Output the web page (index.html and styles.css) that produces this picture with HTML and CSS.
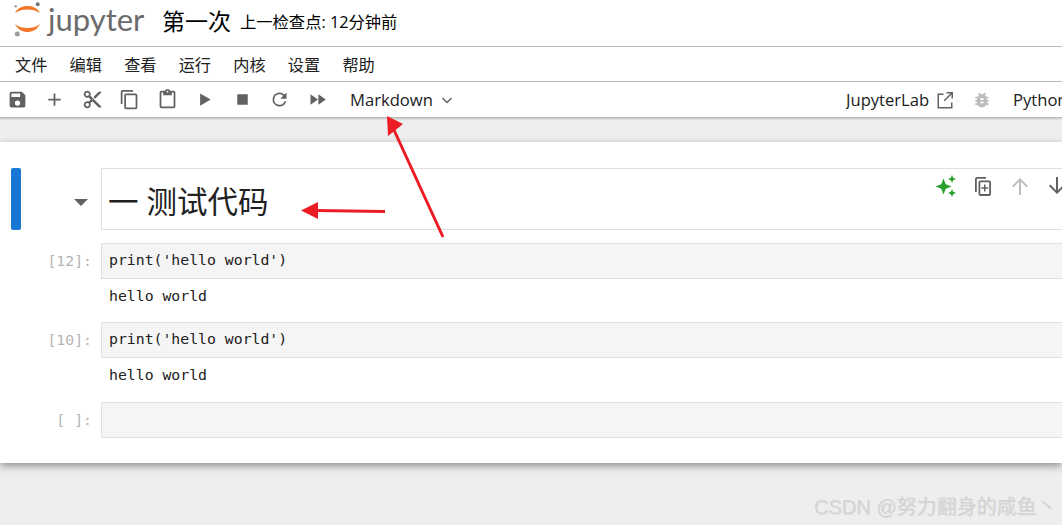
FILE: index.html
```html
<!DOCTYPE html>
<html lang="zh">
<head>
<meta charset="utf-8">
<title>第一次</title>
<link rel="stylesheet" href="styles.css">
</head>
<body>
<header class="topbar">
  <svg class="logo" width="30" height="36" viewBox="0 0 30 36">
    <path fill="#f37726" d="M2 11C5 5.500 10 4 14.500 4S24 5.500 27 11C23 8.500 19 7.500 14.500 7.500S6 8.500 2 11z"/>
    <path fill="#f37726" d="M2 22C6 25 10 26 14.500 26S23 25 27 22C24 28 19 30 14.500 30S5 28 2 22z"/>
    <circle cx="24.700" cy="2.300" r="2" fill="#767677"/>
    <circle cx="2.700" cy="4.300" r="1.300" fill="#9e9e9e"/>
    <circle cx="4.300" cy="32" r="2.500" fill="#9e9e9e"/>
  </svg>
  <span class="wordmark">jupyter</span>
  <span class="nbname">第一次</span>
  <span class="checkpoint">上一检查点: 12分钟前</span>
</header>
<nav class="menubar">
  <span>文件</span><span>编辑</span><span>查看</span><span>运行</span><span>内核</span><span>设置</span><span>帮助</span>
</nav>
<div class="toolbar">
  <svg class="tb" viewBox="0 0 24 24"><path d="M17 3H5a2 2 0 0 0-2 2v14a2 2 0 0 0 2 2h14a2 2 0 0 0 2-2V7l-4-4zm-5 16a3 3 0 1 1 0-6 3 3 0 0 1 0 6zm3-10H5V5h10v4z"/></svg>
  <svg class="tb" viewBox="0 0 24 24"><path d="M19 13h-6v6h-2v-6H5v-2h6V5h2v6h6v2z"/></svg>
  <svg class="tb" viewBox="0 0 24 24"><path d="M9.640 7.640c.23-.5.360-1.050.360-1.640 0-2.210-1.790-4-4-4S2 3.790 2 6s1.790 4 4 4c.59 0 1.140-.13 1.640-.36L10 12l-2.360 2.360C7.140 14.130 6.590 14 6 14c-2.210 0-4 1.790-4 4s1.790 4 4 4 4-1.790 4-4c0-.59-.13-1.140-.36-1.640L12 14l7 7h3v-1L9.640 7.640zM6 8a2 2 0 1 1 0-4 2 2 0 0 1 0 4zm0 12a2 2 0 1 1 0-4 2 2 0 0 1 0 4zm6-7.500a.5.500 0 1 1 0-1 .5.500 0 0 1 0 1zM19 3l-6 6 2 2 7-7V3h-3z"/></svg>
  <svg class="tb" viewBox="0 0 24 24"><path d="M16 1H4a2 2 0 0 0-2 2v14h2V3h12V1zm3 4H8a2 2 0 0 0-2 2v14a2 2 0 0 0 2 2h11a2 2 0 0 0 2-2V7a2 2 0 0 0-2-2zm0 16H8V7h11v14z"/></svg>
  <svg class="tb" viewBox="0 0 24 24"><path d="M19 2h-4.180C14.400.84 13.300 0 12 0S9.600.84 9.180 2H5a2 2 0 0 0-2 2v16a2 2 0 0 0 2 2h14a2 2 0 0 0 2-2V4a2 2 0 0 0-2-2zm-7 0a1 1 0 1 1 0 2 1 1 0 0 1 0-2zm7 18H5V4h2v3h10V4h2v16z"/></svg>
  <svg class="tb" viewBox="0 0 24 24"><path d="M7 5v14l12-7z"/></svg>
  <svg class="tb" viewBox="0 0 24 24"><path d="M6 6h12v12H6z"/></svg>
  <svg class="tb" viewBox="0 0 24 24"><path d="M17.650 6.350A7.960 7.960 0 0 0 12 4a8 8 0 1 0 7.740 10h-2.080A6 6 0 1 1 12 6c1.660 0 3.140.69 4.220 1.780L13 11h7V4l-2.350 2.350z"/></svg>
  <svg class="tb" viewBox="0 0 24 24"><path d="M4 18l8.500-6L4 6v12zm9-12v12l8.500-6L13 6z"/></svg>
  <span class="celltype">Markdown<svg class="chev" viewBox="0 0 12 12"><path d="M1.500 4l4.500 4.500L10.500 4" fill="none" stroke="#616161" stroke-width="1.500"/></svg></span>
  <span class="tb-right">
    <span class="lab">JupyterLab</span>
    <svg class="ext" viewBox="0 0 18 18"><path d="M7.500 2.500H1.500v15h15v-6h-1.500v4.500H3V4h4.500zM10.500 1v1.500h4L7.700 9.300l1 1 6.800-6.800v4H17V1z" fill="#616161"/></svg>
    <svg class="bug" viewBox="0 0 24 24"><path d="M20 8h-2.810a6 6 0 0 0-1.820-1.960L17 4.410 15.590 3l-2.170 2.170a6 6 0 0 0-2.830 0L8.410 3 7 4.410l1.620 1.630A6 6 0 0 0 6.810 8H4v2h2.090c-.5.330-.9.660-.09 1v1H4v2h2v1c0 .34.040.67.090 1H4v2h2.810A6 6 0 0 0 12 21a6 6 0 0 0 5.190-3H20v-2h-2.090c.05-.33.090-.66.090-1v-1h2v-2h-2v-1c0-.34-.04-.67-.09-1H20V8zm-6 8h-4v-2h4v2zm0-4h-4v-2h4v2z" fill="#bdbdbd"/></svg>
    <span class="kernel">Python 3</span>
  </span>
</div>
<main class="stage">
  <section class="panel">
    <article class="cell md">
      <div class="bar"></div>
      <div class="prompt caret"><svg width="14" height="7" viewBox="0 0 14 7"><path d="M0 0h14L7 7z" fill="#616161"/></svg></div>
      <div class="mdbox">
        <span class="h1">一 测试代码</span>
        <div class="celltools">
          <svg width="24" height="24" viewBox="0 0 24 24"><path fill="#2ca02c" d="M9.500 4.500l2.300 5.700 5.700 2.300-5.700 2.300-2.300 5.700-2.300-5.700L1.500 12.500l5.700-2.300zM18 1l1.200 2.800L22 5l-2.800 1.200L18 9l-1.200-2.800L14 5l2.800-1.200zM18 15l1.200 2.800L22 19l-2.800 1.200L18 23l-1.200-2.800L14 19l2.800-1.200z"/></svg>
          <svg width="24" height="24" viewBox="0 0 24 24"><path fill="#616161" d="M15 3H6a2 2 0 0 0-2 2v13h1.800V5c0-.1.100-.2.200-.2h9V3zm3 3.500H9.500a2 2 0 0 0-2 2V20a2 2 0 0 0 2 2H18a2 2 0 0 0 2-2V8.500a2 2 0 0 0-2-2zm.2 13.500H9.300V8.300h8.900V20zM13 10.500h1.500v2.700h2.700v1.500h-2.700v2.700H13v-2.700h-2.700v-1.500H13z"/></svg>
          <svg width="24" height="24" viewBox="0 0 24 24"><path fill="#bdbdbd" d="M12 4l-8 8 1.400 1.400 5.600-5.600V21h2V7.800l5.600 5.600L20 12z"/></svg>
          <svg width="24" height="24" viewBox="0 0 24 24"><path fill="#616161" d="M12 20l8-8-1.400-1.400-5.600 5.600V3h-2v13.200l-5.600-5.600L4 12z"/></svg>
        </div>
      </div>
    </article>
    <article class="cell code c1">
      <div class="prompt">[12]:</div>
      <div class="src">print('hello world')</div>
    </article>
    <div class="output">hello world</div>
    <article class="cell code c2">
      <div class="prompt">[10]:</div>
      <div class="src">print('hello world')</div>
    </article>
    <div class="output">hello world</div>
    <article class="cell code c3">
      <div class="prompt">[ ]:</div>
      <div class="src"></div>
    </article>
  </section>
</main>
<svg class="arrows" width="1062" height="525" viewBox="0 0 1062 525">
  <path d="M443 237L394 130" stroke="#ec1c24" stroke-width="3" fill="none"/>
  <path d="M387 116L403 124 388 136z" fill="#ec1c24"/>
  <path d="M385 211.500L315 210.500" stroke="#ec1c24" stroke-width="3" fill="none"/>
  <path d="M301 210.500L318 202V219z" fill="#ec1c24"/>
</svg>
<div class="watermark">CSDN @努力翻身的咸鱼丶</div>
</body>
</html>
```
FILE: styles.css
```css
* { box-sizing: border-box; }
html, body { margin: 0; height: 525px; width: 1062px; overflow: hidden; }
body {
  position: relative;
  display: flex;
  flex-direction: column;
  background: #eee;
  color: #000;
  font-family: "Open Sans", "Noto Sans CJK SC", sans-serif;
}
.topbar {
  height: 47px;
  flex: none;
  background: #fff;
  border-bottom: 1px solid #bdbdbd;
  display: flex;
  align-items: center;
  overflow: hidden;
}
.logo { margin-left: 13px; margin-top: -6px; flex: none; }
.wordmark {
  margin-left: 5px;
  width: 114px;
  font-family: "Lato", sans-serif;
  font-size: 31px;
  letter-spacing: 0;
  color: #6b6b6b;
  margin-top: -9px;
}
.nbname { font-size: 23px; color: #000; margin-top: -6px; }
.checkpoint { margin-left: 9px; font-size: 16.300px; margin-top: -5px; }
.menubar {
  height: 35px;
  flex: none;
  background: #fff;
  border-bottom: 1px solid #bdbdbd;
  display: flex;
  align-items: center;
  padding-left: 15px;
  gap: 22.200px;
  font-size: 16.200px;
  color: #212121;
}
.toolbar {
  height: 36px;
  flex: none;
  background: #fff;
  border-bottom: 1px solid #bdbdbd;
  box-shadow: 0 1px 2px rgba(0,0,0,.2);
  display: flex;
  align-items: center;
  padding-left: 6.500px;
  gap: 16.500px;
  position: relative;
  z-index: 2;
}
.tb { width: 21px; height: 21px; fill: #616161; flex: none; }
.celltype {
  margin-left: 6px;
  font-size: 16.600px;
  color: #212121;
  display: flex;
  align-items: center;
  gap: 8px;
}
.chev { width: 12px; height: 12px; }
.tb-right {
  position: absolute;
  left: 846px;
  top: 0;
  height: 35px;
  width: 216px;
  overflow: hidden;
  display: flex;
  align-items: center;
  font-size: 16.600px;
  color: #212121;
  white-space: nowrap;
}
.lab { width: 90px; flex: none; }
.ext { width: 18px; height: 18px; flex: none; }
.bug { width: 20px; height: 20px; margin-left: 18px; flex: none; }
.kernel { margin-left: 21px; }
.stage { flex: 1; padding-top: 24px; }
.panel {
  height: 321px;
  background: #fff;
  box-shadow: 0 3px 8px rgba(0,0,0,.4);
  padding-top: 26px;
}
.cell { display: flex; position: relative; }
.bar {
  position: absolute;
  left: 11px;
  top: 0;
  width: 10px;
  height: 62px;
  background: #1976d2;
  border-radius: 2px;
}
.prompt {
  width: 101px;
  flex: none;
  padding-right: 9px;
  text-align: right;
  font-family: "DejaVu Sans Mono", monospace;
  font-size: 14.800px;
  color: #b5b5b5;
  line-height: 36px;
}
.caret { padding-right: 13px; line-height: 1; padding-top: 26px; }
.mdbox {
  flex: 1;
  height: 62px;
  background: #fff;
  border: 1px solid #e0e0e0;
  border-right: 0;
  display: flex;
  align-items: center;
  padding-left: 6px;
  padding-top: 1px;
  position: relative;
}
.h1 { font-size: 30.500px; color: #212121; }
.celltools {
  position: absolute;
  left: 832px;
  top: 5px;
  display: flex;
  gap: 13px;
}
.celltools svg { flex: none; }
.src {
  flex: 1;
  height: 36px;
  background: #f5f5f5;
  border: 1px solid #e0e0e0;
  border-right: 0;
  padding-left: 7px;
  font-family: "DejaVu Sans Mono", monospace;
  font-size: 14.800px;
  line-height: 32px;
  color: #212121;
}
.c1 { margin-top: 13px; }
.c2 { margin-top: 8px; }
.c3 { margin-top: 9px; }
.output {
  margin-left: 109px;
  height: 35px;
  font-family: "DejaVu Sans Mono", monospace;
  font-size: 14.800px;
  line-height: 34px;
  color: #212121;
}
.arrows { position: absolute; left: 0; top: 0; pointer-events: none; z-index: 5; }
.watermark {
  position: absolute;
  left: 814px;
  top: 491px;
  font-family: "Liberation Sans", "Noto Sans CJK SC", sans-serif;
  font-size: 20px;
  color: #d4d4d4;
  text-shadow: 1px 1px 0 rgba(0,0,0,.08);
  white-space: nowrap;
  z-index: 6;
}
```
